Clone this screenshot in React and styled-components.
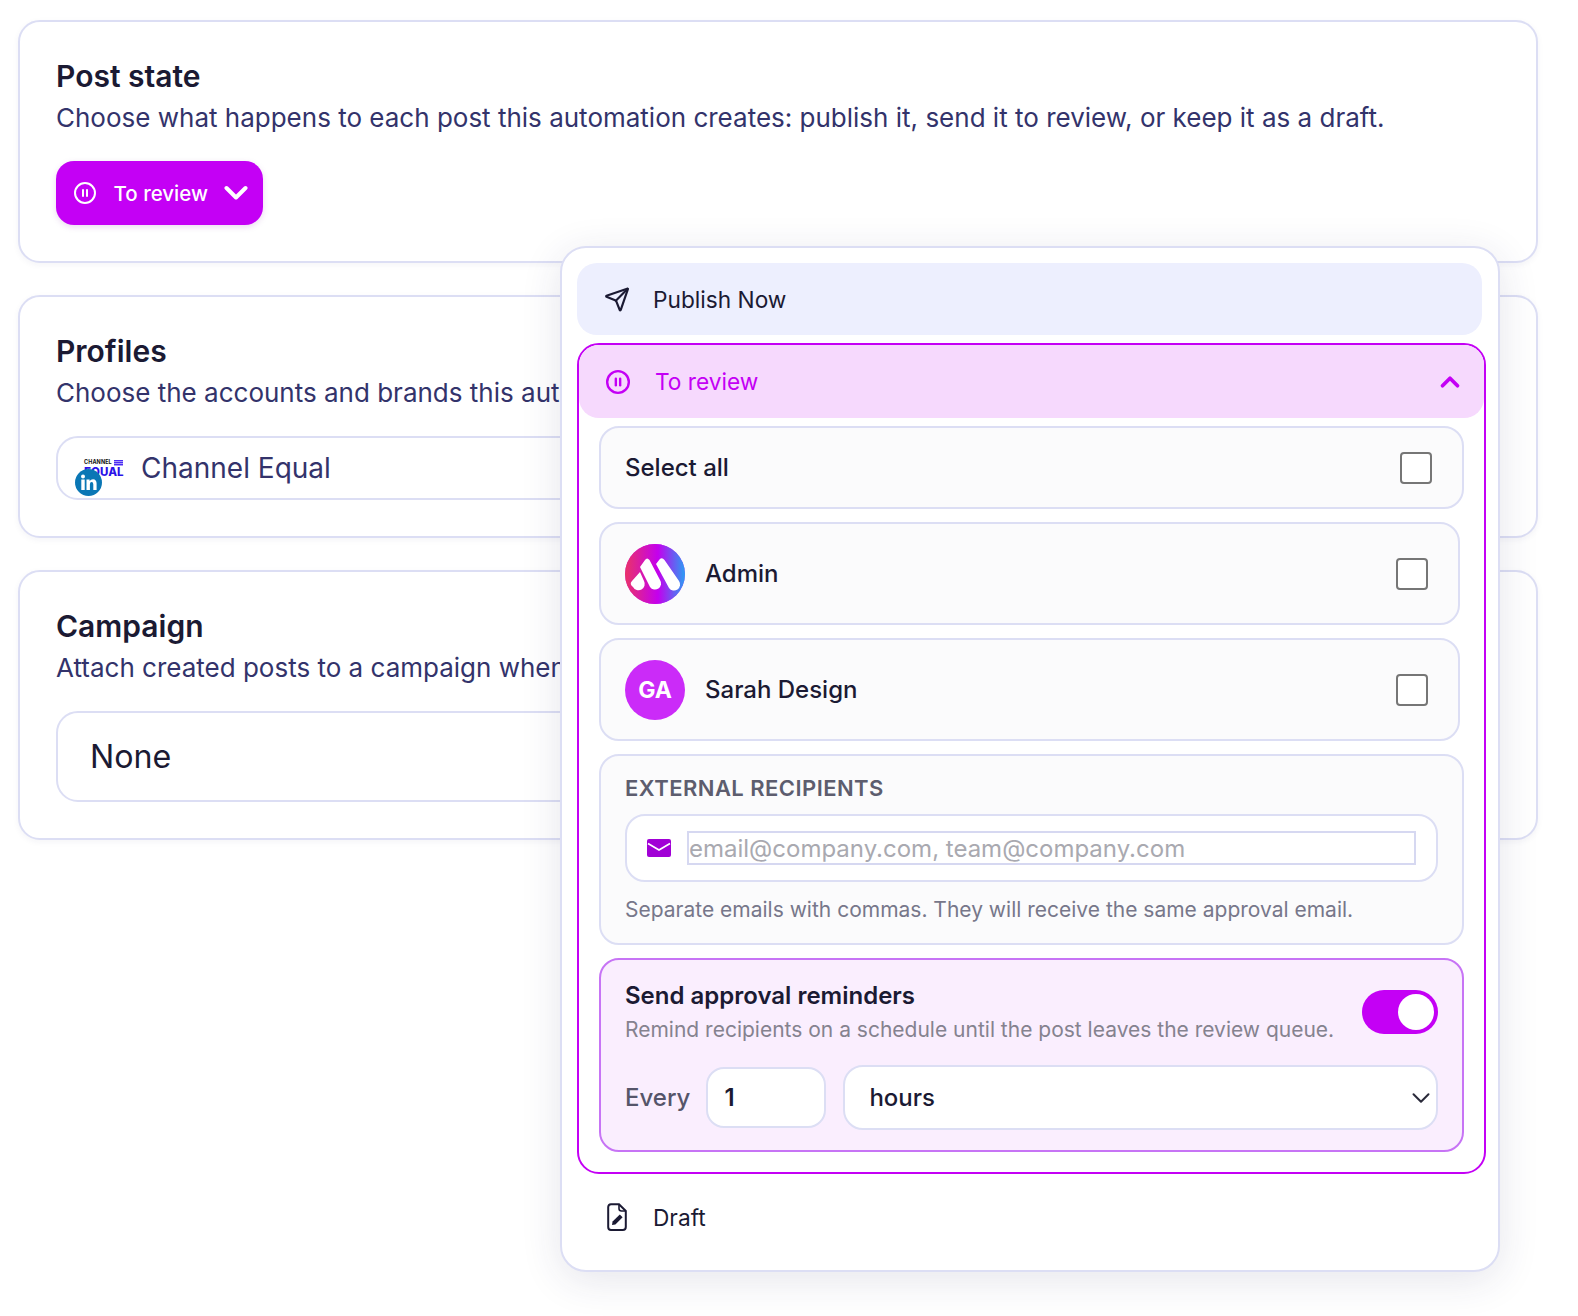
import React from "react";
import styled, { createGlobalStyle } from "styled-components";
import { Send, CirclePause, ChevronDown, ChevronUp } from "lucide-react";

const Global = createGlobalStyle`
  * { box-sizing: border-box; }
  html, body { margin: 0; padding: 0; background: #fff; }
  body { font-family: Inter, "Noto Sans", sans-serif; color: #1b1a33; }
`;

const line = "#dcdef4";
const magenta = "#c400f5";

const Page = styled.div`
  position: relative;
  width: 1578px;
  height: 1316px;
  padding: 20px 40px 0 18px;
  overflow: hidden;
  display: flex;
  flex-direction: column;
  gap: 32px;
`;
const Card = styled.section`
  border: 2px solid ${line};
  border-radius: 22px;
  padding: 36px;
  background: #fff;
  box-shadow: 0 2px 6px rgba(40, 40, 90, 0.05);
`;
const CardTitle = styled.h2`
  margin: 0;
  font-size: 30px;
  line-height: 36px;
  font-weight: 600;
  color: #1b1a33;
`;
const CardText = styled.p`
  margin: 4px 0 0;
  font-size: 26px;
  line-height: 40px;
  color: #33336b;
  white-space: nowrap;
  overflow: hidden;
`;
const StateButton = styled.button`
  margin-top: 23px;
  display: inline-flex;
  align-items: center;
  height: 64px;
  padding: 0 15px 0 17px;
  border: 0;
  border-radius: 18px;
  background: ${magenta};
  color: #fff;
  font: 500 20.5px Inter, sans-serif;
  gap: 16.5px;
  box-shadow: 0 2px 6px rgba(120, 0, 160, 0.15);
`;
const Field = styled.div`
  display: flex;
  align-items: center;
  margin-top: ${(p) => p.$top}px;
  height: ${(p) => p.$height}px;
  padding-left: ${(p) => p.$pad}px;
  gap: 18px;
  border: 2px solid ${line};
  border-radius: 22px;
  font-size: ${(p) => p.$size}px;
  color: ${(p) => p.$color};
  background: #fff;
`;
const LogoBox = styled.div`
  position: relative;
  width: 44px;
  height: 16px;
  flex: none;
  line-height: 1;
`;
const LogoTop = styled.div`
  font-size: 5.5px;
  font-weight: 700;
  color: #111;
  letter-spacing: 0.1px;
  height: 6px;
  display: flex;
  gap: 2px;
  align-items: center;
  padding-left: 5px;
  white-space: nowrap;
`;
const LogoMark = styled.span`
  width: 9px;
  height: 6px;
  background: repeating-linear-gradient(#4a2cf5 0 1px, #a99af8 1px 2px);
`;
const LogoBottom = styled.div`
  width: 54px;
  font-size: 11.5px;
  font-weight: 800;
  color: #2a12e8;
  height: 12px;
  line-height: 12px;
  padding-left: 5px;
  white-space: nowrap;
`;
const Badge = styled.svg`
  position: absolute;
  left: -4px;
  top: 9px;
  width: 27px;
  height: 27px;
`;

const Popover = styled.div`
  position: absolute;
  left: 560px;
  top: 246px;
  width: 940px;
  padding: 15px 16px 18px 15px;
  border: 2px solid ${line};
  border-radius: 26px;
  background: #fff;
  box-shadow: 0 8px 40px rgba(40, 40, 90, 0.12);
  display: flex;
  flex-direction: column;
  gap: 8px;
`;
const OptionRow = styled.div`
  display: flex;
  align-items: center;
  height: ${(p) => p.$height}px;
  padding-left: 27px;
  gap: 23px;
  border-radius: 20px;
  font-size: 22.7px;
  color: #1b1a33;
  background: ${(p) => (p.$active ? "#edeffe" : "transparent")};
`;
const IconSlot = styled.span`
  display: flex;
  justify-content: center;
  width: 26px;
  flex: none;
`;
const ReviewSection = styled.div`
  margin-right: -4px;
  border: 2px solid ${magenta};
  border-radius: 22px;
`;
const ReviewHeader = styled.div`
  display: flex;
  align-items: center;
  justify-content: space-between;
  height: 73px;
  padding: 0 19px 0 26px;
  border-radius: 20px;
  background: #f6d9fd;
  color: ${magenta};
  font-size: 22.7px;
`;
const ReviewLabel = styled.span`
  display: flex;
  align-items: center;
  gap: 24px;
`;
const ReviewBody = styled.div`
  display: flex;
  flex-direction: column;
  gap: 13px;
  padding: 8px 20px 20px 20px;
`;
const Row = styled.label`
  display: flex;
  align-items: center;
  height: ${(p) => p.$height}px;
  margin-right: ${(p) => p.$inset || 0}px;
  padding: 0 30px 0 24px;
  gap: 20px;
  border: 2px solid ${line};
  border-radius: 20px;
  background: #fbfbfc;
  font-size: 24px;
  font-weight: 500;
  color: #1b1a33;
`;
const RowName = styled.span`
  flex: 1;
`;
const Check = styled.input.attrs({ type: "checkbox" })`
  appearance: none;
  width: 32px;
  height: 32px;
  margin: 0;
  border: 2px solid #767676;
  border-radius: 4px;
  background: #fff;
`;
const Avatar = styled.span`
  width: 60px;
  height: 60px;
  flex: none;
  border-radius: 50%;
  display: flex;
  align-items: center;
  justify-content: center;
  background: #cb2bf8;
  color: #fff;
  font-size: 23px;
  font-weight: 700;
  overflow: hidden;
`;
const Panel = styled.div`
  border: 2px solid ${line};
  border-radius: 20px;
  background: #fbfbfc;
  padding: 16px 24px 17px;
`;
const PanelLabel = styled.div`
  font-size: 22px;
  line-height: 32px;
  font-weight: 600;
  letter-spacing: 0.45px;
  color: #5d5d6e;
`;
const EmailWrap = styled.div`
  margin-top: 10px;
  height: 68px;
  display: flex;
  align-items: center;
  gap: 16px;
  padding: 0 20px 0 20px;
  border: 2px solid ${line};
  border-radius: 20px;
  background: #fff;
`;
const EmailInput = styled.input`
  flex: 1;
  min-width: 0;
  height: 34px;
  padding: 0;
  border: 2px solid #d6d8f1;
  background: #fff;
  font: 400 24px Inter, sans-serif;
  outline: none;
  &::placeholder { color: #a9a9b0; opacity: 1; }
`;
const Help = styled.div`
  margin-top: 12px;
  font-size: 21px;
  line-height: 32px;
  color: #77778a;
  white-space: nowrap;
`;
const Reminder = styled.div`
  border: 2px solid #c774f5;
  border-radius: 20px;
  background: #faeefe;
  padding: 21px 24px 20px 24px;
`;
const ReminderTop = styled.div`
  display: flex;
  justify-content: space-between;
  align-items: flex-start;
`;
const ReminderTitle = styled.div`
  font-size: 24px;
  line-height: 30px;
  font-weight: 600;
  color: #1b1a33;
`;
const ReminderText = styled.div`
  margin-top: 3px;
  font-size: 21px;
  line-height: 32px;
  color: #85828f;
  white-space: nowrap;
`;
const Toggle = styled.span`
  margin-top: 9px;
  width: 76px;
  height: 44px;
  flex: none;
  display: flex;
  align-items: center;
  justify-content: flex-end;
  padding-right: 4px;
  border-radius: 22px;
  background: ${magenta};
`;
const Knob = styled.span`
  width: 36px;
  height: 36px;
  border-radius: 50%;
  background: #fff;
`;
const EveryRow = styled.div`
  margin-top: 19px;
  display: flex;
  align-items: center;
`;
const EveryLabel = styled.span`
  font-size: 24px;
  font-weight: 500;
  color: #55556a;
  margin-right: 16px;
`;
const NumberBox = styled.input`
  width: 120px;
  height: 61px;
  padding: 0 16px;
  margin-right: 17px;
  border: 2px solid ${line};
  border-radius: 18px;
  background: #fff;
  font: 600 24px Inter, sans-serif;
  color: #1b1a33;
  outline: none;
`;
const SelectBox = styled.div`
  flex: 1;
  height: 65px;
  display: flex;
  align-items: center;
  justify-content: space-between;
  padding: 0 0 0 24px;
  border: 2px solid ${line};
  border-radius: 20px;
  background: #fff;
  font-size: 24px;
  font-weight: 500;
  color: #1b1a33;
`;

function MLogo() {
  return (
    <svg width="60" height="60" viewBox="0 0 60 60">
      <defs>
        <linearGradient id="mg" x1="0" y1="0" x2="1" y2="0">
          <stop offset="0" stopColor="#ea3368" />
          <stop offset="0.55" stopColor="#c400ee" />
          <stop offset="1" stopColor="#2a9df4" />
        </linearGradient>
      </defs>
      <rect width="60" height="60" fill="url(#mg)" />
      <path fill="#fff" d="M15 28 L19 37 A6 6 0 0 1 8 43 Q4 40 7 37 Z" />
      <path fill="#fff" d="M15 23 L20 16 Q22 13 24.5 16 L35 36 A6 6 0 0 1 25 43 Z" />
      <path fill="#fff" d="M31 20 L34.5 15.5 Q37 13 39.5 16 L54 37 A6 6 0 0 1 44 44 Z" />
    </svg>
  );
}

function MailIcon() {
  return (
    <svg width="24" height="18" viewBox="0 0 24 18">
      <rect width="24" height="18" rx="2" fill="#a100d6" />
      <path d="M1 4.5 L12 11 L23 4.5" fill="none" stroke="#fff" strokeWidth="1.7" />
    </svg>
  );
}

function DraftIcon() {
  return (
    <svg width="20" height="28" viewBox="0 0 20 28" fill="none">
      <path d="M4 1.2 H12 L18.8 8 V24 A3 3 0 0 1 15.8 27 H4 A3 3 0 0 1 1.2 24 V4 A3 3 0 0 1 4 1.2Z" stroke="#1b1a33" strokeWidth="2" />
      <path d="M12 1.2 V5.5 A2.5 2.5 0 0 0 14.5 8 H18.8" stroke="#1b1a33" strokeWidth="1.6" />
      <path d="M5 22 L5.6 18.6 L12.8 11.4 L15.6 14.2 L8.4 21.4Z" fill="#1b1a33" />
    </svg>
  );
}

function BoldChevron() {
  return (
    <svg width="24" height="16" viewBox="0 0 24 16" fill="none">
      <path d="M2.5 3 L12 12.5 L21.5 3" stroke="#fff" strokeWidth="4" strokeLinecap="round" strokeLinejoin="round" />
    </svg>
  );
}

function LinkedInBadge() {
  return (
    <Badge viewBox="0 0 27 27">
      <circle cx="13.5" cy="13.5" r="13.5" fill="#0a77b5" />
      <circle cx="8" cy="7.5" r="2" fill="#fff" />
      <rect x="6.3" y="10.5" width="3.4" height="10.5" fill="#fff" />
      <path d="M11.5 10.5 H14.6 V12 Q15.8 10.2 18 10.2 Q21.6 10.4 21.6 14.5 V21 H18.3 V15.2 Q18.3 13 16.6 13 Q14.9 13 14.9 15.2 V21 H11.5Z" fill="#fff" />
    </Badge>
  );
}

export default function App() {
  return (
    <>
      <Global />
      <Page>
        <Card>
          <CardTitle>Post state</CardTitle>
          <CardText>Choose what happens to each post this automation creates: publish it, send it to review, or keep it as a draft.</CardText>
          <StateButton>
            <CirclePause size={24} strokeWidth={2} />
            To review
            <BoldChevron />
          </StateButton>
        </Card>
        <Card>
          <CardTitle>Profiles</CardTitle>
          <CardText>Choose the accounts and brands this automation publishes to.</CardText>
          <Field $top={23} $height={64} $pad={21} $size={28} $color="#33336b">
            <LogoBox>
              <LogoTop>CHANNEL<LogoMark /></LogoTop>
              <LogoBottom>EQUAL</LogoBottom>
              <LinkedInBadge />
            </LogoBox>
            Channel Equal
          </Field>
        </Card>
        <Card>
          <CardTitle>Campaign</CardTitle>
          <CardText>Attach created posts to a campaign when you want to group them.</CardText>
          <Field $top={23} $height={91} $pad={32} $size={32.2} $color="#1b1a33">None</Field>
        </Card>

        <Popover>
          <OptionRow $active $height={72}>
            <IconSlot><Send size={33} strokeWidth={2} color="#1b1a33" /></IconSlot>
            Publish Now
          </OptionRow>
          <ReviewSection>
            <ReviewHeader>
              <ReviewLabel>
                <IconSlot><CirclePause size={28} strokeWidth={2.2} /></IconSlot>
                To review
              </ReviewLabel>
              <ChevronUp size={30} strokeWidth={3} />
            </ReviewHeader>
            <ReviewBody>
              <Row $height={83}>
                <RowName>Select all</RowName>
                <Check />
              </Row>
              <Row $height={103} $inset={4}>
                <Avatar><MLogo /></Avatar>
                <RowName>Admin</RowName>
                <Check />
              </Row>
              <Row $height={103} $inset={4}>
                <Avatar>GA</Avatar>
                <RowName>Sarah Design</RowName>
                <Check />
              </Row>
              <Panel>
                <PanelLabel>EXTERNAL RECIPIENTS</PanelLabel>
                <EmailWrap>
                  <MailIcon />
                  <EmailInput placeholder="email@company.com, team@company.com" />
                </EmailWrap>
                <Help>Separate emails with commas. They will receive the same approval email.</Help>
              </Panel>
              <Reminder>
                <ReminderTop>
                  <div>
                    <ReminderTitle>Send approval reminders</ReminderTitle>
                    <ReminderText>Remind recipients on a schedule until the post leaves the review queue.</ReminderText>
                  </div>
                  <Toggle><Knob /></Toggle>
                </ReminderTop>
                <EveryRow>
                  <EveryLabel>Every</EveryLabel>
                  <NumberBox defaultValue="1" />
                  <SelectBox>
                    hours
                    <ChevronDown size={30} strokeWidth={1.6} color="#2a2a3a" />
                  </SelectBox>
                </EveryRow>
              </Reminder>
            </ReviewBody>
          </ReviewSection>
          <OptionRow $height={70}>
            <IconSlot><DraftIcon /></IconSlot>
            Draft
          </OptionRow>
        </Popover>
      </Page>
    </>
  );
}
